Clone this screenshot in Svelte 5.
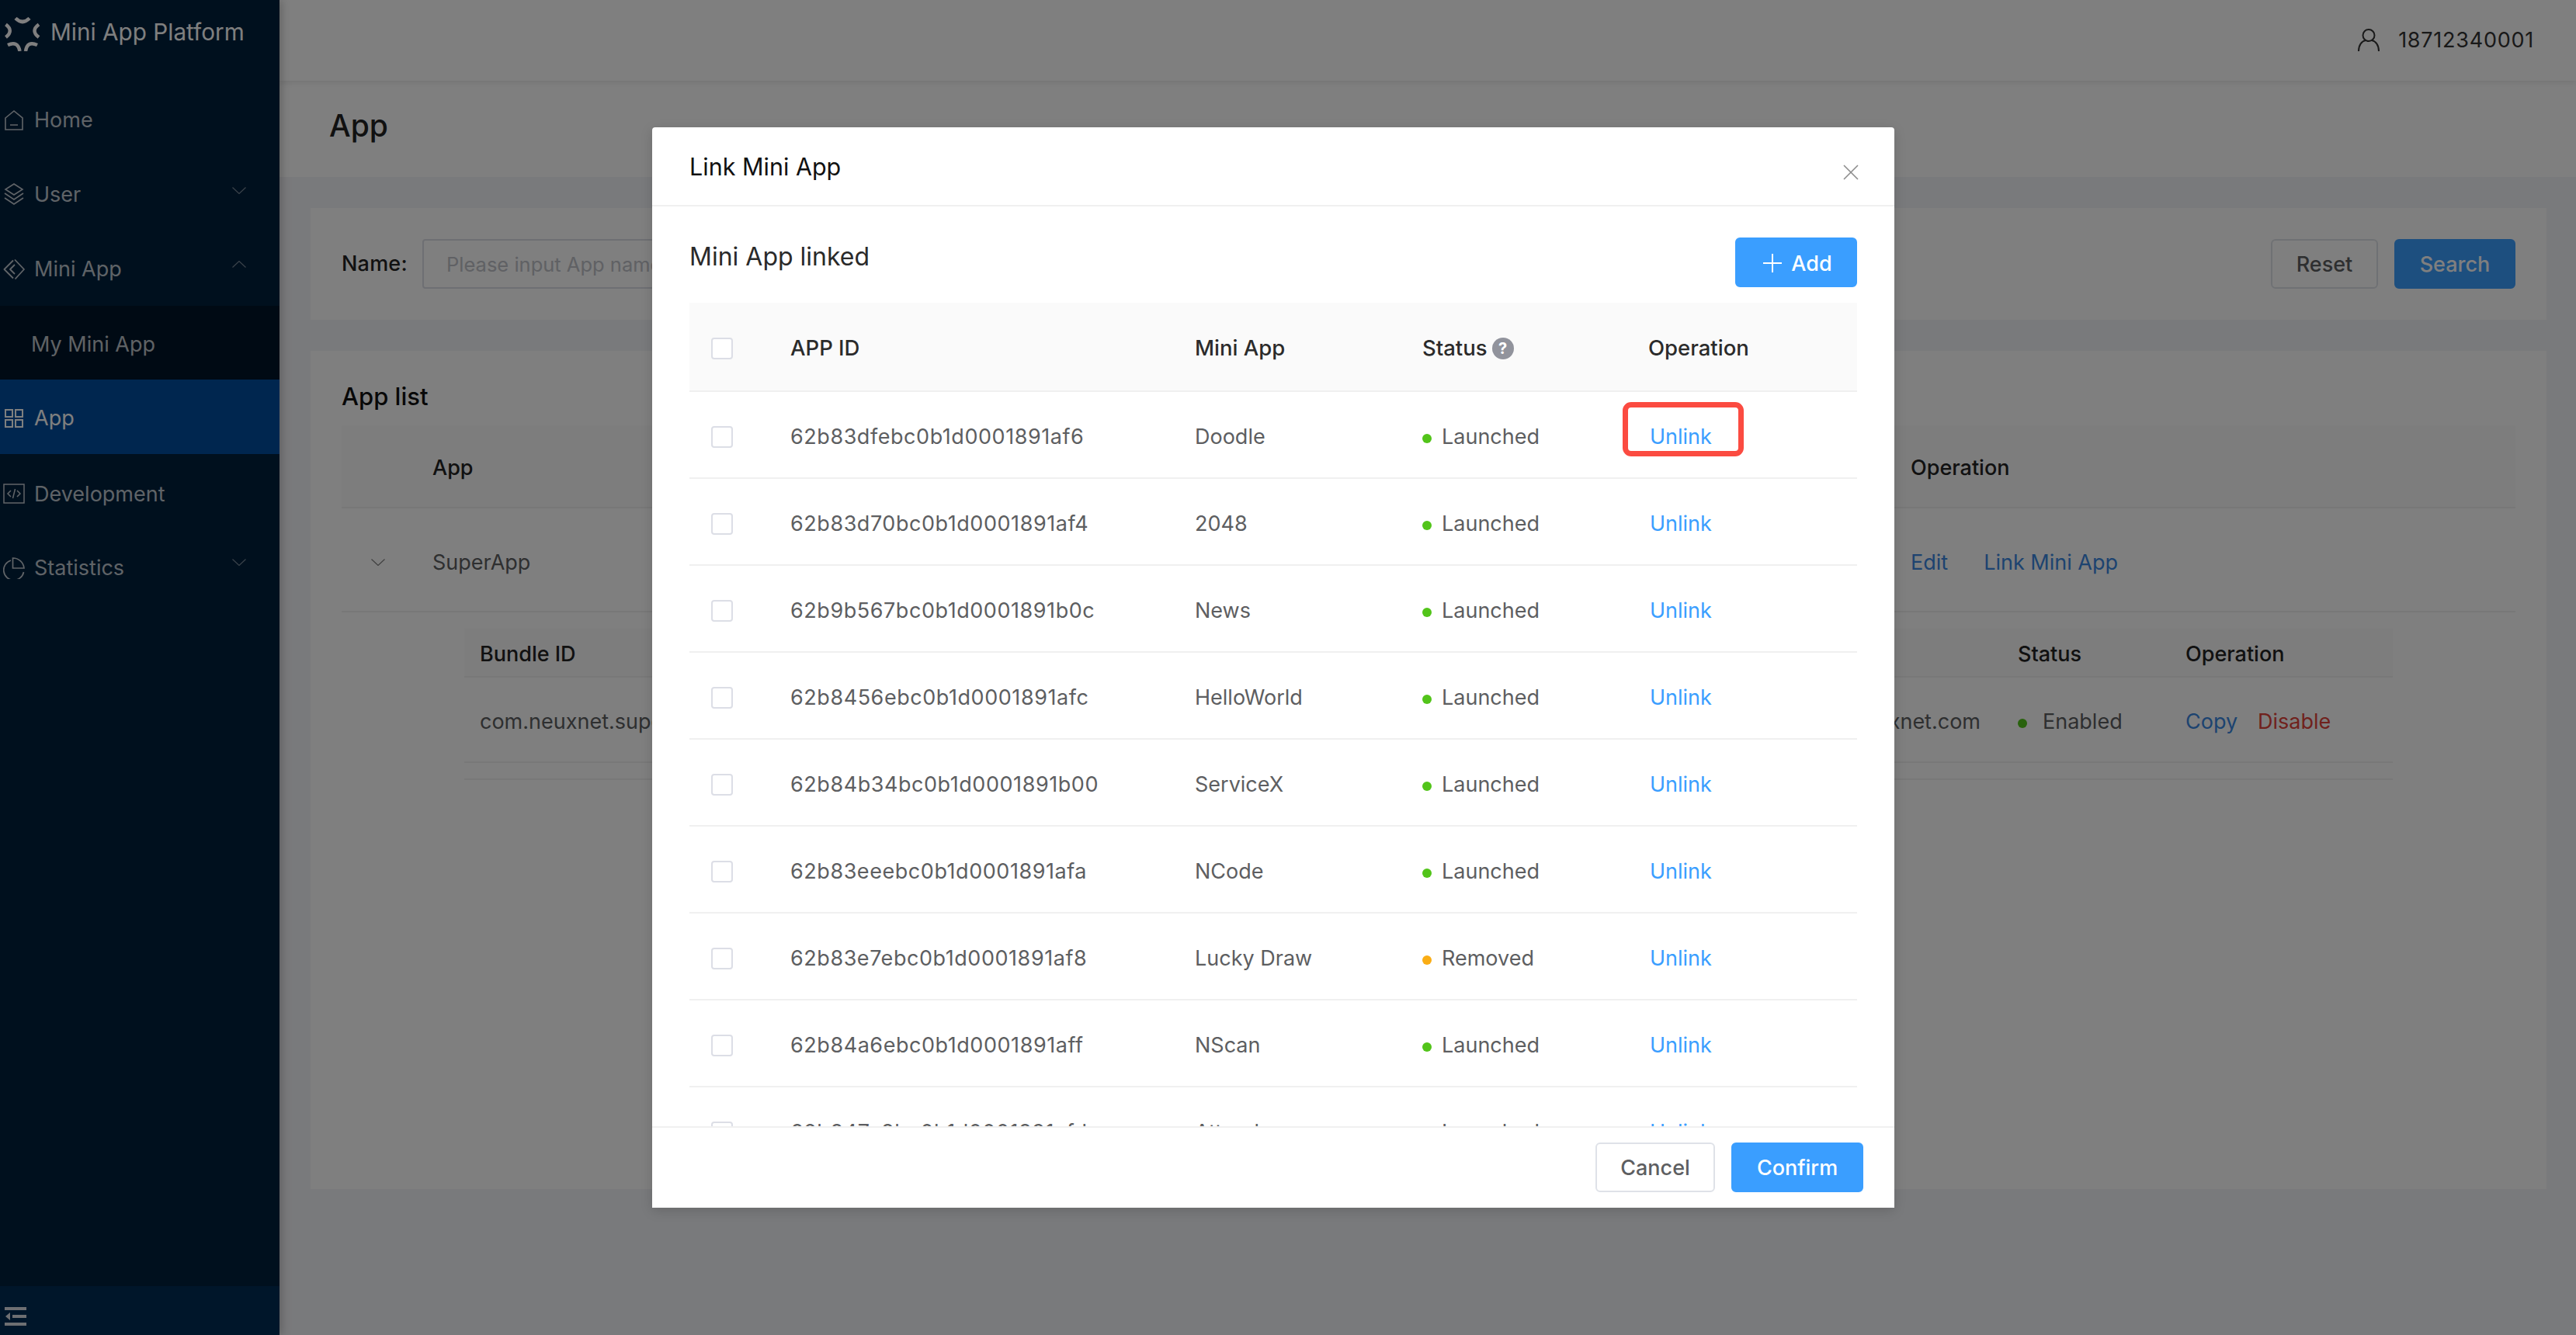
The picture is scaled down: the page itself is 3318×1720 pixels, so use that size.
<script>
  const rows = [
    ['62b83dfebc0b1d0001891af6', 'Doodle', 'Launched'],
    ['62b83d70bc0b1d0001891af4', '2048', 'Launched'],
    ['62b9b567bc0b1d0001891b0c', 'News', 'Launched'],
    ['62b8456ebc0b1d0001891afc', 'HelloWorld', 'Launched'],
    ['62b84b34bc0b1d0001891b00', 'ServiceX', 'Launched'],
    ['62b83eeebc0b1d0001891afa', 'NCode', 'Launched'],
    ['62b83e7ebc0b1d0001891af8', 'Lucky Draw', 'Removed'],
    ['62b84a6ebc0b1d0001891aff', 'NScan', 'Launched'],
    ['62b847c8bc0b1d0001891afd', 'Attendance', 'Launched']
  ];
</script>

<div class="page">
  <aside class="side">
    <div class="brand">
      <svg class="logo" viewBox="0 0 46 44" fill="none" stroke="#fff" stroke-width="4.500" stroke-linecap="butt">
        <path d="M14 1.500Q23 10.500 32 1.500M44 9.500Q33 17.500 44 26M1.500 9.500Q12 17.500 1.500 26M4 36Q17 30 19.500 44M27 44Q29 30 42 36" />
      </svg>
      <span>Mini App Platform</span>
    </div>
    <nav class="menu">
      <div class="item">
        <svg class="ic" viewBox="0 0 28 28" fill="none" stroke="currentColor" stroke-width="1.600"><path d="M3 11L14 2l11 9v15H3zM9 20h10" /></svg>
        <span>Home</span>
      </div>
      <div class="item">
        <svg class="ic" viewBox="0 0 28 28" fill="none" stroke="currentColor" stroke-width="1.600"><path d="M14 1l11 7-11 7L3 8zM2 13l12 8 12-8M2 19l12 8 12-8" /></svg>
        <span>User</span>
        <svg class="chev" viewBox="0 0 18 9" fill="none" stroke="currentColor" stroke-width="1.200"><path d="M0.500 0.500L9 8.500l8.500-8" /></svg>
      </div>
      <div class="item mini">
        <svg class="ic" viewBox="0 0 28 28" fill="none" stroke="currentColor" stroke-width="1.800" stroke-linejoin="round"><path d="M13 2.500L1.500 14 13 25.500M15 1.500L27 14 15.500 26.500M15 8L9 14l6 6" /></svg>
        <span>Mini App</span>
        <svg class="chev" viewBox="0 0 18 9" fill="none" stroke="currentColor" stroke-width="1.200"><path d="M0.500 8.500L9 0.500l8.500 8" /></svg>
      </div>
      <div class="item sub low"><span>My Mini App</span></div>
      <div class="item active low">
        <svg class="ic" viewBox="0 0 28 28" fill="none" stroke="currentColor" stroke-width="2"><path d="M3 3h9v9H3zM16 3h9v9h-9zM3 16h9v9H3zM16 16h9v9h-9z" /></svg>
        <span>App</span>
      </div>
      <div class="item low">
        <svg class="ic" viewBox="0 0 28 28" fill="none" stroke="currentColor" stroke-width="1.500"><path d="M1 2h26v24H1zM10 10l-4 4 4 4M18 10l4 4-4 4M15.500 8l-3 12" /></svg>
        <span>Development</span>
      </div>
      <div class="item low">
        <svg class="ic" viewBox="0 0 28 28" fill="none" stroke="currentColor" stroke-width="1.700"><path d="M10 4A13 13 0 1 0 26.500 19M12.500 1v13H27A14.500 14.500 0 0 0 12.500 1z" /></svg>
        <span>Statistics</span>
        <svg class="chev" viewBox="0 0 18 9" fill="none" stroke="currentColor" stroke-width="1.200"><path d="M0.500 0.500L9 8.500l8.500-8" /></svg>
      </div>
    </nav>
    <div class="collapse">
      <svg viewBox="0 0 28 24" fill="#dcdfe4"><path d="M0 0h28v4H0zM0 20h28v4H0zM10 10h18v4H10zM7 7v10l-6-5z" /></svg>
    </div>
  </aside>

  <main class="main">
    <header class="top">
      <svg class="usr" viewBox="0 0 28 30" fill="none" stroke="#333" stroke-width="2"><circle cx="14" cy="9.500" r="7.500" /><path d="M1 30c0-8 4-13 9-14M27 30c0-8-4-13-9-14" /></svg>
      <span>18712340001</span>
    </header>
    <div class="title"><h1>App</h1></div>
    <div class="content">
      <section class="card filter">
        <label for="nm">Name:</label>
        <input id="nm" placeholder="Please input App name" />
        <div class="spacer"></div>
        <button class="btn">Reset</button>
        <button class="btn pri">Search</button>
      </section>
      <section class="card list">
        <h2>App list</h2>
        <div class="ohead"><span>App</span><span>Operation</span></div>
        <div class="orow">
          <svg class="exp" viewBox="0 0 18 9" fill="none" stroke="#808080" stroke-width="1.200"><path d="M0.500 0.500L9 8.500l8.500-8" /></svg>
          <span class="oname">SuperApp</span>
          <span class="oops"><a href="#e">Edit</a><a href="#l">Link Mini App</a></span>
        </div>
        <div class="nest">
          <div class="nhead"><span>Bundle ID</span><span>Status</span><span>Operation</span></div>
          <div class="nrow">
            <span>com.neuxnet.superapp</span>
            <span class="mail">dev@neuxnet.com</span>
            <span class="st"><i class="dot g2"></i>Enabled</span>
            <span class="nops"><a href="#c">Copy</a><a href="#d" class="red">Disable</a></span>
          </div>
        </div>
      </section>
    </div>
  </main>

  <div class="mask"></div>

  <div class="modal">
    <div class="mhead">
      <span>Link Mini App</span>
      <svg class="close" viewBox="0 0 20 20" fill="none" stroke="#8c8c8c" stroke-width="1.600"><path d="M1 1l18 18M19 1L1 19" /></svg>
    </div>
    <div class="mbody">
      <div class="mtop">
        <span>Mini App linked</span>
        <button class="btn pri add">
          <svg viewBox="0 0 24 24" fill="none" stroke="#fff" stroke-width="2"><path d="M12 0v24M0 12h24" /></svg>
          Add
        </button>
      </div>
      <div class="thead grid">
        <span class="cb"></span>
        <span>APP ID</span>
        <span>Mini App</span>
        <span class="sth">Status<b class="help">?</b></span>
        <span>Operation</span>
      </div>
      {#each rows as r, i}
        <div class="trow grid">
          <span class="cb"></span>
          <span class="id">{r[0]}</span>
          <span>{r[1]}</span>
          <span class="st"><i class="dot" class:o={r[2] === 'Removed'}></i>{r[2]}</span>
          <span class="unl" class:mark={i === 0}><a href="#u">Unlink</a></span>
        </div>
      {/each}
    </div>
    <div class="mfoot">
      <button class="btn">Cancel</button>
      <button class="btn pri conf">Confirm</button>
    </div>
  </div>
</div>

<style>
  :global(body) { margin: 0; }
  .page {
    position: relative;
    display: flex;
    width: 3318px;
    height: 1720px;
    overflow: hidden;
    background: #f3f4f8;
    font: 400 27px/1.3 Inter, "Noto Sans", sans-serif;
    color: #5d5e61;
  }
  a { text-decoration: none; color: #3a9eff; }
  .side {
    width: 360px;
    flex: none;
    display: flex;
    flex-direction: column;
    background: #00203c;
    color: rgba(255, 255, 255, .76);
    box-shadow: 2px 0 12px rgba(0, 0, 0, .25);
    z-index: 1;
  }
  .brand {
    height: 107px;
    display: flex;
    align-items: flex-start;
    gap: 13px;
    padding: 22px 0 0 6px;
    box-sizing: border-box;
    color: #fff;
    font-size: 29.700px;
    line-height: 38px;
  }
  .logo { width: 46px; height: 44px; flex: none; }
  .menu { flex: 1; }
  .item {
    height: 95.500px;
    box-sizing: border-box;
    display: flex;
    align-items: center;
    gap: 12px;
    padding-left: 4px;
    position: relative;
  }
  .mini { padding-top: 2px; }
  .low { padding-top: 4px; }
  .ic { width: 28px; height: 28px; flex: none; }
  .chev { position: absolute; left: 299px; top: 38px; width: 18px; height: 9px; opacity: .6; }
  .sub { padding-left: 40px; background: #001429; }
  .active { background: #004c9e; color: #fff; margin-bottom: 2px; }
  .collapse {
    background: #002c54;
    padding: 27px 0 0 6px;
    flex: none;
    height: 36px;
  }
  .collapse svg { display: block; width: 28px; height: 24px; }

  .main { flex: 1; display: flex; flex-direction: column; min-width: 0; }
  .top {
    height: 104px;
    background: #fff;
    display: flex;
    align-items: center;
    justify-content: flex-end;
    gap: 24px;
    padding-right: 54px;
    color: #333;
    box-shadow: 0 2px 8px rgba(0, 0, 0, .1);
    position: relative;
    flex: none;
  }
  .top span { letter-spacing: .75px; }
  .usr { width: 28px; height: 30px; margin-top: -2px; }
  .title {
    height: 124px;
    background: #fff;
    padding-left: 424px;
    margin-left: -360px;
    box-sizing: border-box;
    flex: none;
  }
  h1 { margin: 0; padding-top: 32px; font: 500 39px/52px Inter, sans-serif; color: #222; }
  .content { padding: 40px 38px 40px 40px; flex: 1; }
  .card { background: #fff; box-sizing: border-box; }
  .filter {
    height: 144px;
    display: flex;
    align-items: center;
    padding: 0 40px;
    margin-bottom: 40px;
  }
  label { color: #222; font-weight: 500; width: 104px; white-space: nowrap; letter-spacing: .2px; }
  input {
    width: 700px;
    height: 64px;
    box-sizing: border-box;
    border: 2px solid #dcdee6;
    border-radius: 4px;
    padding: 0 29px;
    font: inherit;
    font-size: 25.500px;
  }
  input::placeholder { color: #c0c2c8; }
  .spacer { flex: 1; }
  .btn {
    height: 64px;
    box-sizing: border-box;
    border: 2px solid #dfe2e8;
    border-radius: 6px;
    background: #fff;
    color: #5d5e61;
    font: 500 27px Inter, sans-serif;
    padding: 0 28px;
  }
  .pri { background: #3a9eff; border-color: #3a9eff; color: #fff; }
  .filter .btn { width: 138px; padding: 0; }
  .filter .pri { width: 156px; margin-left: 21px; }
  .list { height: 1080px; padding: 40px; }
  h2 { margin: 0; height: 56px; font: 500 31px/38px Inter, sans-serif; color: #111; }
  .ohead {
    height: 107px;
    background: #fafafa;
    border-bottom: 2px solid #f0f0f0;
    box-sizing: border-box;
    display: flex;
    align-items: center;
    padding: 4px 0 0 117px;
    font-weight: 500;
    color: #222;
  }
  .ohead span:first-child { width: 1904px; }
  .orow {
    height: 134px;
    border-bottom: 2px solid #f0f0f0;
    box-sizing: border-box;
    display: flex;
    align-items: center;
    padding: 7px 0 0 38px;
    position: relative;
  }
  .exp { width: 18px; height: 9px; flex: none; margin-right: 61px; }
  .oname { width: 1904px; }
  .oops { display: flex; gap: 46px; }
  .oops a { color: #3a87e0; }
  .nest {
    margin-left: 158px;
    width: 2484px;
    height: 216px;
    padding-top: 21px;
    box-sizing: border-box;
    border-bottom: 2px solid #f0f0f0;
  }
  .nhead {
    height: 63px;
    background: #fafafa;
    border-bottom: 2px solid #f0f0f0;
    box-sizing: border-box;
    display: grid;
    grid-template-columns: 1981px 216px 1fr;
    align-items: center;
    padding: 4px 0 0 20px;
    font-weight: 500;
    color: #222;
  }
  .nrow {
    height: 110px;
    border-bottom: 2px solid #f0f0f0;
    box-sizing: border-box;
    display: grid;
    grid-template-columns: 1681px 300px 216px 1fr;
    align-items: center;
    padding: 6px 0 0 20px;
  }
  .mail { white-space: nowrap; text-align: right; padding-right: 48px; }
  .nops { display: flex; gap: 26px; }
  .nops a { color: #3a87e0; }
  .nops a.red { color: #e0433a; }

  .mask { position: absolute; inset: 0; background: rgba(0, 0, 0, .5); z-index: 5; }
  .modal {
    position: absolute;
    left: 840px;
    top: 164px;
    width: 1600px;
    height: 1392px;
    background: #fff;
    border-radius: 4px;
    z-index: 6;
    display: flex;
    flex-direction: column;
    box-shadow: 0 4px 16px rgba(0, 0, 0, .15);
  }
  .mhead {
    height: 102px;
    flex: none;
    box-sizing: border-box;
    border-bottom: 2px solid #f0f0f0;
    padding: 30px 48px 0;
    color: #111;
    font-size: 30.500px;
    line-height: 42px;
    position: relative;
  }
  .close { position: absolute; left: 1534px; top: 48px; width: 20px; height: 20px; }
  .mbody { flex: 1; overflow: hidden; padding: 0 48px; min-height: 0; }
  .mtop {
    display: flex;
    justify-content: space-between;
    align-items: flex-start;
    height: 124px;
    padding-top: 40px;
    box-sizing: border-box;
    font-size: 32px;
    line-height: 50px;
    color: #2a2a2a;
  }
  .add {
    width: 157px;
    padding: 2px 0 0 4px;
    display: flex;
    align-items: center;
    justify-content: center;
    gap: 12px;
    line-height: 1;
  }
  .add svg { width: 24px; height: 24px; }
  .grid {
    display: grid;
    grid-template-columns: 130px 521px 293px 291px 1fr;
    align-items: center;
    position: relative;
  }
  .cb {
    width: 28px;
    height: 28px;
    margin-left: 28px;
    box-sizing: border-box;
    border: 2px solid #dcdee6;
    border-radius: 4px;
    background: #fff;
  }
  .thead {
    height: 115px;
    padding-top: 5px;
    background: #fafafa;
    border-bottom: 2px solid #f0f0f0;
    box-sizing: border-box;
    font-weight: 500;
    font-size: 27.500px;
    color: #2b2b2b;
  }
  .sth { display: flex; align-items: center; gap: 6px; }
  .help {
    width: 28px;
    height: 28px;
    border-radius: 50%;
    background: #91939c;
    color: #fff;
    font: 700 20px/28px Inter, sans-serif;
    text-align: center;
  }
  .trow {
    height: 112px;
    padding-top: 6px;
    border-bottom: 2px solid #f0f0f0;
    box-sizing: border-box;
  }
  .id { letter-spacing: .55px; }
  .st { display: flex; align-items: center; }
  .dot {
    width: 12px;
    height: 12px;
    border-radius: 50%;
    background: #52c41a;
    margin: 4px 13px 0 0;
    flex: none;
  }
  .dot.o { background: #faad14; }
  .dot.g2 { background: #52c41a; margin-right: 20px; }
  .unl { padding-left: 2px; position: relative; }
  .mark::after {
    content: "";
    position: absolute;
    left: -33px;
    top: -27px;
    width: 156px;
    height: 70px;
    box-sizing: border-box;
    border: 7px solid #fb4b41;
    border-radius: 11px;
  }
  .mfoot {
    height: 105px;
    flex: none;
    box-sizing: border-box;
    border-top: 2px solid #f0f0f0;
    display: flex;
    justify-content: flex-end;
    gap: 21px;
    padding: 19px 40px 0;
    background: #fff;
  }
  .mfoot .btn { width: 154px; padding: 0; }
  .mfoot .conf { width: 170px; }
</style>
